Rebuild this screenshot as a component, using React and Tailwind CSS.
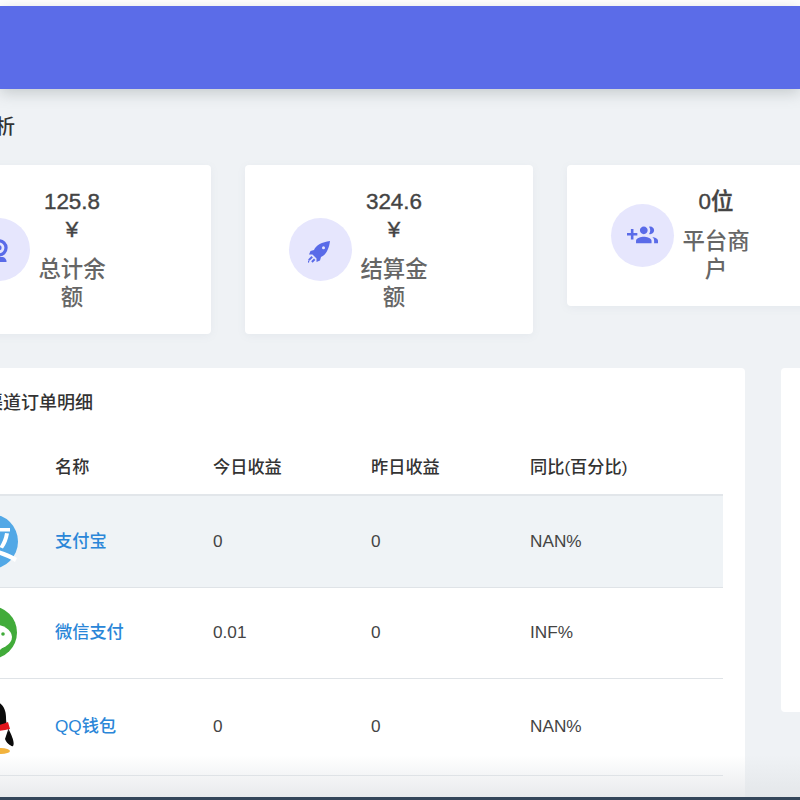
const fontStack = "font-['Liberation_Sans','Noto_Sans_CJK_SC',sans-serif]"

function WebcamIcon() {
  return (
    <svg viewBox="0 0 24 24" className="h-[26px] w-[26px] text-[#5a6be8]" fill="currentColor">
      <path fillRule="evenodd" d="M12 2a8 8 0 1 1 0 16a8 8 0 0 1 0-16zm0 3a5 5 0 1 0 0 10a5 5 0 0 0 0-10z" />
      <circle cx="12" cy="10" r="2.400" />
      <path d="M5 23c0-2.500 1.500-4 3.500-4.500h7c2 .5 3.500 2 3.500 4.500z" />
    </svg>
  )
}

function RocketIcon() {
  return (
    <svg viewBox="0 0 22 22" className="mt-[5px] mr-[3px] h-[22px] w-[22px] text-[#5a6be8]" fill="currentColor">
      <path fillRule="evenodd" d="M22 0C14 1 8 4 6 9L2.500 10L1 13.500h3.500L8.500 17.500V21L12 19.500L13 16C18 14 21 8 22 0zM15.500 5.200a1.500 1.500 0 1 1 0 3a1.500 1.500 0 0 1 0-3z" />
      <path d="M3.500 15l1.400 1.400L1.500 19.800L.1 18.400z M6 17.500l1.400 1.400L4.600 21.700L3.200 20.300z M1.300 20.500a1 1 0 1 0 0 .1z" />
    </svg>
  )
}

function GroupAddIcon() {
  return (
    <svg viewBox="0 0 24 24" className="h-[31px] w-[31px] text-[#5a6be8]" fill="currentColor">
      <path d="M8 10H5V7H3v3H0v2h3v3h2v-3h3v-2zm10 1c1.660 0 2.990-1.340 2.990-3S19.660 5 18 5c-.32 0-.63.05-.91.14.57.81.9 1.790.9 2.860s-.34 2.040-.9 2.860c.28.09.59.14.91.14zm-5 0c1.660 0 2.990-1.340 2.990-3S14.660 5 13 5s-3 1.340-3 3 1.340 3 3 3zm6.620 2.160c.83.73 1.380 1.660 1.380 2.840v2h3v-2c0-1.540-2.370-2.490-4.380-2.840zM13 13c-2 0-6 1-6 3v2h12v-2c0-2-4-3-6-3z" />
    </svg>
  )
}

function AlipayLogo() {
  return (
    <svg viewBox="0 0 55 55" className="h-[55px] w-[55px]">
      <circle cx="27.500" cy="27.500" r="27.500" fill="#52a8e6" />
      <path d="M22 14h25v3.500H22z" fill="#fff" />
      <path d="M42 19l4 .5c-1 6-3 11-6 15l-3.500-1.500c2.500-4 4.500-8 5.500-14z" fill="#fff" />
      <path d="M20 33c12 1 24 5 34 11l-2 4c-10-6-20-9-32-11z" fill="#fff" />
    </svg>
  )
}

function WechatLogo() {
  return (
    <svg viewBox="0 0 53 53" className="h-[53px] w-[53px]">
      <circle cx="26.500" cy="26.500" r="26.500" fill="#41ab3a" />
      <ellipse cx="27" cy="31" rx="21" ry="13" fill="#fff" />
      <path d="M28 42l10 0l-6 6z" fill="#fff" />
      <circle cx="39" cy="28" r="1.800" fill="#41ab3a" />
      <circle cx="20" cy="28" r="1.800" fill="#41ab3a" />
    </svg>
  )
}

function QQLogo() {
  return (
    <svg viewBox="0 0 50 60" className="h-[60px] w-[50px]">
      <path d="M25 3c10 0 16 7 16 17c0 6 1 9 3 13c3 6 6 13 4 16c-2 1-4-2-6-5c-2 7-9 10-17 10s-14-4-16-11c-2 3-4 6-6 5c-2-3 0-9 3-16c2-5 4-8 4-14C10 9 15 3 25 3z" fill="#0b0b0b" />
      <path d="M13 32h30c1 7 0 15-4 20c-7 2-15 2-22 0c-4-5-5-13-4-20z" fill="#fff" />
      <path d="M43 33c2 4 4 11 2 15c-2-1-4-3-5-6z" fill="#0b0b0b" />
      <path d="M8 26c10 4 25 4 35-1l2 7c-12 3-26 3-37 0z" fill="#e0141c" />
      <ellipse cx="14" cy="54" rx="11" ry="3" fill="#f2b33d" />
      <ellipse cx="36" cy="54" rx="9" ry="3" fill="#f2b33d" />
    </svg>
  )
}

function StatCard({ icon, value, unit, label }) {
  return (
    <div className="flex w-[288px] shrink-0 items-center self-start rounded bg-white pt-[23px] pb-[22px] pl-[44px] shadow-[0_2px_8px_rgba(120,130,150,0.08)]">
      <div className="mb-[1px] flex h-[63px] w-[63px] shrink-0 items-center justify-center rounded-full bg-[#e6e6fd]">
        {icon}
      </div>
      <div className="ml-[6px] w-[72px] text-center text-[22.400px] leading-[28px] font-medium">
        <div className="text-[#444] [-webkit-text-stroke:0.4px_#444]">
          {value}
          {unit && <div>{unit}</div>}
        </div>
        <div className="mt-[12px] text-[#666]">{label}</div>
      </div>
    </div>
  )
}

const rows = [
  { name: "支付宝", today: "0", yesterday: "0", ratio: "NAN%", logo: <AlipayLogo />, offset: "ml-[10px]", height: "h-[92px]", cell: "pt-[2px]", active: true },
  { name: "微信支付", today: "0.01", yesterday: "0", ratio: "INF%", logo: <WechatLogo />, offset: "ml-[11px]", height: "h-[91px]", cell: "" },
  { name: "QQ钱包", today: "0", yesterday: "0", ratio: "NAN%", logo: <QQLogo />, offset: "ml-[12px]", height: "h-[97px]", cell: "" },
]

export default function App() {
  return (
    <div className={`relative h-[800px] w-[800px] overflow-hidden bg-[#eff2f5] ${fontStack}`}>
      <div className="h-[6px] bg-white" />
      <header className="h-[83px] bg-[#5b6ce8] shadow-[0_4px_14px_rgba(90,100,100,0.28)]" />

      <main className="ml-[-77px] w-[1000px]">
        <h1 className="mt-[26px] ml-[12px] h-[24px] text-[20px] leading-[24px] font-medium text-[#333]">数据分析</h1>

        <div className="mt-[26px] flex h-[169px] gap-[34px]">
          <StatCard icon={<WebcamIcon />} value="125.8" unit="¥" label="总计余额" />
          <StatCard icon={<RocketIcon />} value="324.6" unit="¥" label="结算金额" />
          <StatCard icon={<GroupAddIcon />} value="0位" label="平台商户" />
        </div>

        <div className="mt-[34px] flex items-start gap-[36px]">
          <section className="w-[822px] shrink-0 rounded bg-white pt-[23px] pl-[30px]">
            <h2 className="ml-[32px] h-[24px] text-[18px] leading-[24px] font-medium text-[#333]">渠道订单明细</h2>
            <table className="mt-[25px] w-[770px] table-fixed border-collapse text-left text-[17.200px] text-[#444]">
              <colgroup>
                <col className="w-[102px]" />
                <col className="w-[158px]" />
                <col className="w-[158px]" />
                <col className="w-[159px]" />
                <col className="w-[193px]" />
              </colgroup>
              <thead>
                <tr className="h-[55px] border-b-2 border-[#e2e6ea] text-[#333]">
                  <th></th>
                  <th className="pt-[2px] font-medium">名称</th>
                  <th className="pt-[2px] font-medium">今日收益</th>
                  <th className="pt-[2px] font-medium">昨日收益</th>
                  <th className="pt-[2px] font-medium">同比(百分比)</th>
                </tr>
              </thead>
              <tbody>
                {rows.map((row) => (
                  <tr key={row.name} className={`${row.height} border-b border-[#dfe3e7] ${row.active ? "bg-[#eff3f6]" : ""}`}>
                    <td><div className={row.offset}>{row.logo}</div></td>
                    <td className={`font-medium text-[#2a86d8] ${row.cell}`}>{row.name}</td>
                    <td className={row.cell}>{row.today}</td>
                    <td className={row.cell}>{row.yesterday}</td>
                    <td className={row.cell}>{row.ratio}</td>
                  </tr>
                ))}
              </tbody>
            </table>
            <div className="h-[40px]" />
          </section>
          <aside className="h-[344px] w-[300px] shrink-0 rounded bg-white" />
        </div>
      </main>

      <div className="absolute inset-x-0 bottom-[3px] h-[42px] bg-gradient-to-b from-transparent to-[#dfe2e5]/70" />
      <div className="absolute inset-x-0 bottom-0 h-[3px] bg-[#34465a]" />
    </div>
  )
}
